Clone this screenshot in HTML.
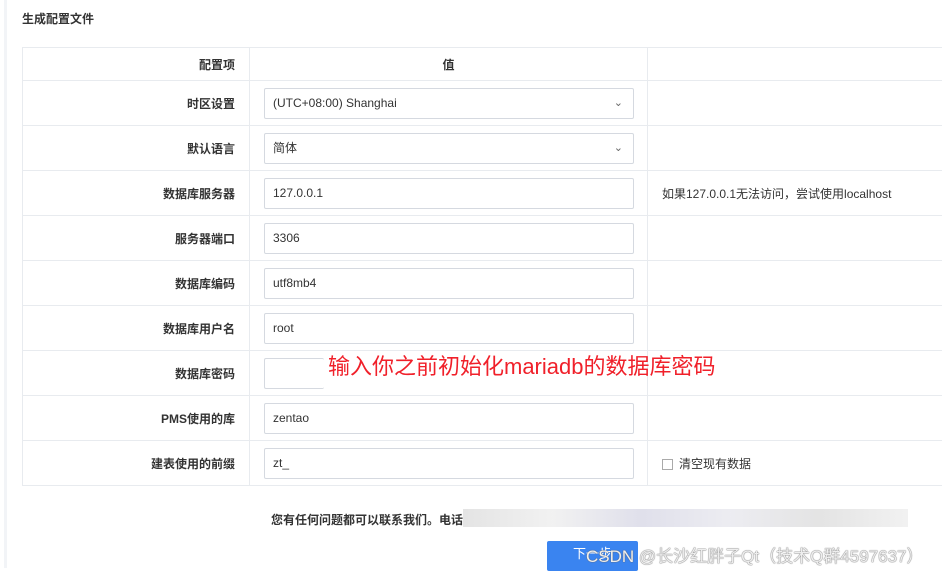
<!DOCTYPE html>
<html><head><meta charset="utf-8"><style>
*{box-sizing:border-box;margin:0;padding:0}
body{width:942px;height:568px;background:#fff;font-family:"Liberation Sans","Noto Sans CJK SC",sans-serif;font-size:12px;color:#333;position:relative;overflow:hidden}
.bar{position:absolute;left:4px;top:0;width:3px;height:568px;background:#f2f4f7}
.title{position:absolute;left:22px;top:10px;font-size:12px;font-weight:bold;color:#333}
table{position:absolute;left:22px;top:47px;border-collapse:collapse;width:922px}
td{border:1px solid #e8ebef;height:45px;font-size:12px}
tr.h td{height:33px;font-weight:bold}
td.k{width:227px;text-align:right;padding-right:14px;font-weight:bold}
td.v{width:398px;padding-left:14px}
td.n{padding-left:14px}
.in{width:370px;height:31px;border:1px solid #d5d9e0;border-radius:2px;padding-left:8px;line-height:29px;position:relative}
.in .c{position:absolute;right:10px;top:0;font-size:11px;color:#666}
.note{position:absolute;left:271px;top:511px;font-weight:bold;font-size:12px}
.blur{position:absolute;left:463px;top:509px;width:445px;height:18px;background:linear-gradient(90deg,#ddd,#eee,#d8d8e6,#e8e8ee,#ddd,#eee);opacity:.8}
.btn{position:absolute;left:547px;top:541px;width:91px;height:30px;background:#3a84f0;border-radius:2px;color:#fff;text-align:center;line-height:26px;font-size:13px}
.wm{position:absolute;left:586px;top:542px;color:#eee;font-size:17px;text-shadow:0 0 1px #666,0 0 1px #666}
.red{position:absolute;left:328px;top:349px;color:#f0202a;font-size:22px}
.cb{display:inline-block;width:11px;height:11px;border:1px solid #aaa;vertical-align:-2px;margin-right:6px}
</style></head><body>
<div class="bar"></div>
<div class="title">生成配置文件</div>
<table>
<tr class="h"><td class="k">配置项</td><td class="v" style="text-align:center;padding:0">值</td><td></td></tr>
<tr><td class="k">时区设置</td><td class="v"><div class="in">(UTC+08:00) Shanghai<span class="c">&#8964;</span></div></td><td></td></tr>
<tr><td class="k">默认语言</td><td class="v"><div class="in">简体<span class="c">&#8964;</span></div></td><td></td></tr>
<tr><td class="k">数据库服务器</td><td class="v"><div class="in">127.0.0.1</div></td><td class="n">如果127.0.0.1无法访问，尝试使用localhost</td></tr>
<tr><td class="k">服务器端口</td><td class="v"><div class="in">3306</div></td><td></td></tr>
<tr><td class="k">数据库编码</td><td class="v"><div class="in">utf8mb4</div></td><td></td></tr>
<tr><td class="k">数据库用户名</td><td class="v"><div class="in">root</div></td><td></td></tr>
<tr><td class="k">数据库密码</td><td class="v"><div class="in" style="width:60px;border-right:none"></div></td><td></td></tr>
<tr><td class="k">PMS使用的库</td><td class="v"><div class="in">zentao</div></td><td></td></tr>
<tr><td class="k">建表使用的前缀</td><td class="v"><div class="in">zt_</div></td><td class="n"><span class="cb"></span>清空现有数据</td></tr>
</table>
<div class="red">输入你之前初始化mariadb的数据库密码</div>
<div class="note">您有任何问题都可以联系我们。电话</div>
<div class="blur"></div>
<div class="btn">下一步</div>
<div class="wm">CSDN @长沙红胖子Qt（技术Q群4597637）</div>
</body></html>
